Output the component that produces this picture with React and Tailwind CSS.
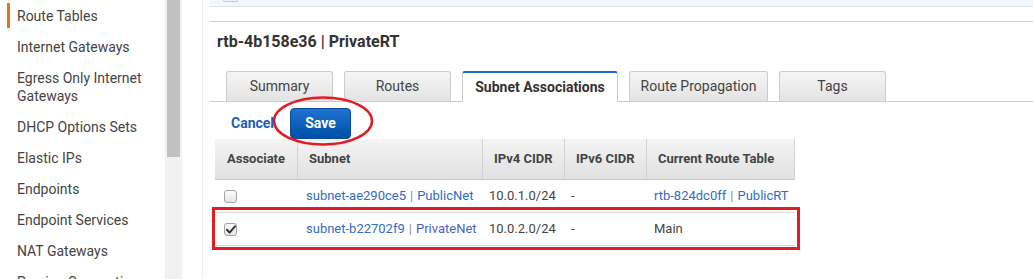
import React from 'react';

const navItems = [
  'Route Tables',
  'Internet Gateways',
  'Egress Only Internet Gateways',
  'DHCP Options Sets',
  'Elastic IPs',
  'Endpoints',
  'Endpoint Services',
  'NAT Gateways',
  'Peering Connections',
];

const tabs = [
  { label: 'Summary', w: 'w-[107px]' },
  { label: 'Routes', w: 'w-[107px]' },
  { label: 'Subnet Associations', w: 'w-[156px]', active: true },
  { label: 'Route Propagation', w: 'w-[139px]' },
  { label: 'Tags', w: 'w-[107px]' },
];

const rows = [
  { checked: false, id: 'subnet-ae290ce5', name: 'PublicNet', cidr: '10.0.1.0/24', v6: '-', rt: { id: 'rtb-824dc0ff', name: 'PublicRT' } },
  { checked: true, id: 'subnet-b22702f9', name: 'PrivateNet', cidr: '10.0.2.0/24', v6: '-', rt: null },
];

const Checkbox = ({ checked }) => (
  <div className="w-[13px] h-[13px] rounded-[3px] border border-[#a3a3a3] bg-gradient-to-b from-[#fcfcfc] to-[#e4e4e4] flex items-center justify-center">
    {checked && (
      <svg width="10" height="9" viewBox="0 0 10 9">
        <path d="M1 4.8 L3.6 7.6 L9 1.4" fill="none" stroke="#333" strokeWidth="2" strokeLinecap="round" strokeLinejoin="round" />
      </svg>
    )}
  </div>
);

export default function App() {
  return (
    <div className="relative w-[1033px] h-[279px] overflow-hidden bg-white flex font-['Roboto','Liberation_Sans',sans-serif] text-[13px] text-[#444]">
      {/* Sidebar */}
      <div className="w-[165px] shrink-0 pl-[7px] text-[14px]">
        {navItems.map((item, i) => (
          <div key={item} className="flex py-[6.5px] leading-[18px]">
            <div className={`w-[3px] shrink-0 -my-[3.5px] ${i === 0 ? 'bg-[#ec7211]' : ''}`} />
            <div className="pl-[7px] pr-[4px]">{item}</div>
          </div>
        ))}
      </div>

      {/* Scrollbar */}
      <div className="w-[17px] shrink-0 bg-[#f1f1f1] pl-[2px]">
        <div className="w-[13px] h-[157px] bg-[#c1c1c1]" />
      </div>

      <div className="w-[20px] shrink-0" />
      <div className="w-px shrink-0 bg-[#ececec]" />
      <div className="w-[7px] shrink-0" />

      {/* Main */}
      <div className="flex-1 min-w-0">
        <div className="h-[7px] bg-[#f1f7fd] border-b border-[#d9e1ea]">
          <div className="ml-[13px] w-[15px] h-[2px] rounded-b-[3px] border border-t-0 border-[#c8c8c8] bg-[#f4f4f4]" />
        </div>
        <div className="h-[15px] border-b border-[#cfcfcf]" />

        <div className="pl-[7px] mt-[10px] text-[16px] font-bold text-[#333] leading-[20px]">rtb-4b158e36 | PrivateRT</div>

        {/* Tabs */}
        <div className="mt-[19px] flex gap-[11px] pl-[16px] border-b border-[#cccccc] h-[31px] text-[14px]">
          {tabs.map(t =>
            t.active ? (
              <div key={t.label} className={`${t.w} h-[31px] -mb-px bg-white border border-b-0 border-[#cccccc] border-t-2 border-t-[#1a6bc9] rounded-t-[3px] flex items-center justify-center font-bold text-[#333]`}>
                {t.label}
              </div>
            ) : (
              <div key={t.label} className={`${t.w} h-[30px] bg-gradient-to-b from-[#f6f6f6] to-[#e3e3e3] border border-b-0 border-[#cccccc] rounded-t-[3px] flex items-center justify-center`}>
                {t.label}
              </div>
            )
          )}
        </div>

        {/* Actions */}
        <div className="mt-[5px] flex items-center pl-[21px] h-[32px] text-[14px]">
          <span className="w-[59px] font-bold text-[#1d5fb8]">Cancel</span>
          <button className="w-[61px] h-[31px] rounded-[4px] bg-gradient-to-b from-[#1f72d0] to-[#0050a6] border border-[#0a4c9c] text-white font-bold">
            Save
          </button>
        </div>

        {/* Table */}
        <div className="ml-[5px] w-[580px]">
          <div className="flex h-[41px] bg-gradient-to-b from-[#f4f4f4] to-[#e1e1e1] border-b border-[#c9c9c9] font-bold text-[#444]">
            <div className="w-[82px] flex items-center pl-[12px]">Associate</div>
            <div className="w-[185px] flex items-center pl-[11px] border-l border-[#d2d2d2]">Subnet</div>
            <div className="w-[82px] flex items-center pl-[11px] border-l border-[#d2d2d2]">IPv4 CIDR</div>
            <div className="w-[82px] flex items-center pl-[11px] border-l border-[#d2d2d2]">IPv6 CIDR</div>
            <div className="w-[149px] flex items-center pl-[11px] border-l border-r border-[#d2d2d2]">Current Route Table</div>
          </div>
          {rows.map(r => (
            <div key={r.id} className="flex h-[33px] border-b border-[#dadada]">
              <div className="w-[82px] flex items-center pl-[9px]">
                <Checkbox checked={r.checked} />
              </div>
              <div className="w-[185px] flex items-center pl-[9px] text-[#2f6dc5]">
                {r.id}<span className="px-[4px] text-[#8a7fb8]">|</span>
                <span className={r.checked ? 'text-[#4f5fc0]' : ''}>{r.name}</span>
              </div>
              <div className="w-[82px] flex items-center pl-[7px]">{r.cidr}</div>
              <div className="w-[82px] flex items-center pl-[7px]">{r.v6}</div>
              <div className="w-[149px] flex items-center pl-[8px]">
                {r.rt ? (
                  <span className="text-[#2f6dc5]">
                    {r.rt.id}<span className="px-[4px] text-[#8a7fb8]">|</span>{r.rt.name}
                  </span>
                ) : (
                  <span>Main</span>
                )}
              </div>
            </div>
          ))}
        </div>
      </div>

      {/* Annotations */}
      <svg className="absolute left-[270px] top-[94px] pointer-events-none" width="106" height="54" viewBox="0 0 106 54">
        <ellipse cx="53" cy="27" rx="49" ry="23.5" fill="none" stroke="#e31b23" strokeWidth="2.5" />
      </svg>
      <div className="absolute left-[212px] top-[207px] w-[588px] h-[43px] border-[3px] border-[#e31b23] pointer-events-none" />
    </div>
  );
}
